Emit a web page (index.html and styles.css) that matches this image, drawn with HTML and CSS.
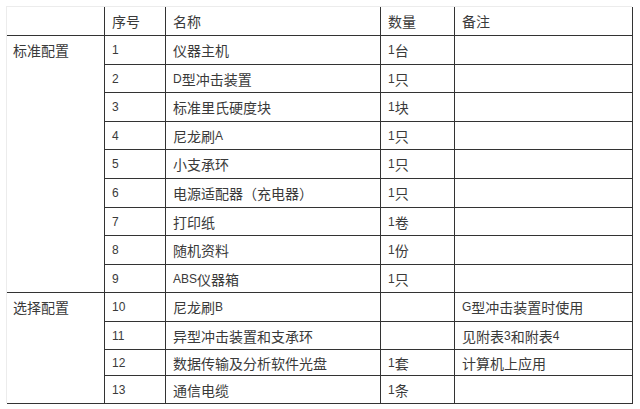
FILE: index.html
```html
<!DOCTYPE html>
<html lang="zh">
<head>
<meta charset="utf-8">
<title>配置表</title>
<link rel="stylesheet" href="styles.css">
</head>
<body>
<div class="sheet">
  <div class="grid">
    <div class="c c0 hd"></div>
    <div class="c hd">序号</div>
    <div class="c hd">名称</div>
    <div class="c hd">数量</div>
    <div class="c hd">备注</div>

    <div class="c c0 grp g1">标准配置</div>
    <div class="c"><span class="n">1</span></div><div class="c">仪器主机</div><div class="c"><span class="n">1</span>台</div><div class="c"></div>
    <div class="c"><span class="n">2</span></div><div class="c"><span class="n">D</span>型冲击装置</div><div class="c"><span class="n">1</span>只</div><div class="c"></div>
    <div class="c"><span class="n">3</span></div><div class="c">标准里氏硬度块</div><div class="c"><span class="n">1</span>块</div><div class="c"></div>
    <div class="c"><span class="n">4</span></div><div class="c">尼龙刷<span class="n">A</span></div><div class="c"><span class="n">1</span>只</div><div class="c"></div>
    <div class="c"><span class="n">5</span></div><div class="c">小支承环</div><div class="c"><span class="n">1</span>只</div><div class="c"></div>
    <div class="c"><span class="n">6</span></div><div class="c">电源适配器（充电器）</div><div class="c"><span class="n">1</span>只</div><div class="c"></div>
    <div class="c"><span class="n">7</span></div><div class="c">打印纸</div><div class="c"><span class="n">1</span>卷</div><div class="c"></div>
    <div class="c"><span class="n">8</span></div><div class="c">随机资料</div><div class="c"><span class="n">1</span>份</div><div class="c"></div>
    <div class="c"><span class="n">9</span></div><div class="c"><span class="n">ABS</span>仪器箱</div><div class="c"><span class="n">1</span>只</div><div class="c"></div>

    <div class="c c0 grp g2">选择配置</div>
    <div class="c"><span class="n">10</span></div><div class="c">尼龙刷<span class="n">B</span></div><div class="c"></div><div class="c"><span class="n">G</span>型冲击装置时使用</div>
    <div class="c"><span class="n">11</span></div><div class="c">异型冲击装置和支承环</div><div class="c"></div><div class="c">见附表<span class="n">3</span>和附表<span class="n">4</span></div>
    <div class="c"><span class="n">12</span></div><div class="c">数据传输及分析软件光盘</div><div class="c"><span class="n">1</span>套</div><div class="c">计算机上应用</div>
    <div class="c"><span class="n">13</span></div><div class="c">通信电缆</div><div class="c"><span class="n">1</span>条</div><div class="c"></div>
  </div>
</div>
</body>
</html>
```

FILE: styles.css
```css
html, body {
  margin: 0;
  padding: 0;
  background: #ffffff;
}
body {
  font-family: "Noto Sans CJK SC", sans-serif;
  font-size: 14px;
  color: #3a3a3a;
}
.sheet {
  padding: 7px 0 0 7px;
}
.grid {
  display: grid;
  width: 626px;
  grid-template-columns: 98px 61px 215px 74px 178px;
  grid-template-rows: 29px 29px 28px 29px 28px 29px 29px 28px 29px 28px 29px 28px 26px 28px;
  box-shadow: -1px -1px 0 0 #ececec;
}
.c {
  box-sizing: border-box;
  border-right: 1px solid #333333;
  border-bottom: 1px solid #333333;
  padding-left: 7px;
  display: flex;
  align-items: center;
  white-space: nowrap;
  line-height: 20px;
}
.c0 {
  grid-column: 1;
}
.grp {
  align-items: flex-start;
  padding-left: 6px;
  padding-top: 4px;
}
.g1 {
  grid-row: 2 / span 9;
}
.g2 {
  grid-row: 11 / span 4;
}
.n {
  font-family: "Liberation Sans", sans-serif;
  font-size: 12px;
}
```
